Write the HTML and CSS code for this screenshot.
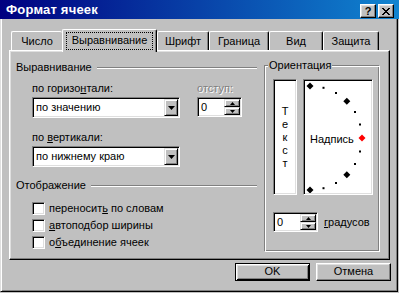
FILE: index.html
```html
<!DOCTYPE html>
<html lang="ru">
<head>
<meta charset="utf-8">
<title>Формат ячеек</title>
<link rel="stylesheet" href="styles.css">
</head>
<body>
<div class="win">
  <div class="titlebar">
    <span class="title">Формат ячеек</span>
    <div class="tbtns">
      <span class="tbtn q">?</span>
      <span class="tbtn"><svg width="8" height="7" viewBox="0 0 8 7"><path d="M0 0h2v1h1v1h2V1h1V0h2v1H7v1H6v1H5v1h1v1h1v1h1v1H6V6H5V5H3v1H2v1H0V6h1V5h1V4h1V3H2V2H1V1H0z" fill="#000"/></svg></span>
    </div>
  </div>
  <div class="client">
    <div class="tabs">
      <div class="tab t1 nor">Число</div>
      <div class="tab t2 sel"><span class="focus">Выравнивание</span></div>
      <div class="tab t3">Шрифт</div>
      <div class="tab t4">Граница</div>
      <div class="tab t5">Вид</div>
      <div class="tab t6">Защита</div>
    </div>
    <div class="panel">
      <div class="left">
        <div class="sep"><span>Выравнивание</span><i class="line"></i></div>
        <div class="agrid">
          <div class="lbl l1">по горизо<u>н</u>тали:</div>
          <div class="lbl dis">отступ:</div>
          <div class="combo"><span class="val">по значению</span><span class="dd"><svg width="7" height="4" viewBox="0 0 7 4"><path d="M0 0h7L3.5 4z" fill="#000"/></svg></span></div>
          <div class="spin"><span class="val">0</span><span class="arrows"><span class="ab"><svg width="5" height="3" viewBox="0 0 5 3"><path d="M2.5 0L5 3H0z" fill="#000"/></svg></span><span class="ab"><svg width="5" height="3" viewBox="0 0 5 3"><path d="M0 0h5L2.5 3z" fill="#000"/></svg></span></span></div>
          <div class="lbl l2">по <u>в</u>ертикали:</div>
          <div class="combo c2"><span class="val">по нижнему краю</span><span class="dd"><svg width="7" height="4" viewBox="0 0 7 4"><path d="M0 0h7L3.5 4z" fill="#000"/></svg></span></div>
        </div>
        <div class="sep s2"><span>Отображение</span><i class="line"></i></div>
        <div class="checks">
          <div class="chk"><span class="cb"></span><span>переносит<u>ь</u> по словам</span></div>
          <div class="chk"><span class="cb"></span><span><u>а</u>втоподбор ширины</span></div>
          <div class="chk"><span class="cb"></span><span>о<u>б</u>ъединение ячеек</span></div>
        </div>
      </div>
      <div class="orient">
        <span class="legend">Ориентация</span>
        <div class="orow">
          <div class="sunk vtext"><span>Т</span><span>е</span><span>к</span><span>с</span><span>т</span></div>
          <div class="sunk dial">
            <svg class="arc" width="66" height="112" viewBox="0 0 66 112">
              <g fill="#000">
                <polygon points="5,1.5 8.5,5 5,8.5 1.5,5"/>
                <polygon points="41.8,16.7 45.3,20.2 41.8,23.7 38.3,20.2"/>
                <polygon points="41.8,90.3 45.3,93.8 41.8,97.3 38.3,93.8"/>
                <polygon points="5,105.5 8.5,109 5,112.5 1.5,109"/>
                <rect x="17.5" y="5.8" width="2" height="2"/>
                <rect x="30" y="11" width="2" height="2"/>
                <rect x="49" y="30" width="2" height="2"/>
                <rect x="54" y="42.5" width="2" height="2"/>
                <rect x="54" y="69.5" width="2" height="2"/>
                <rect x="49" y="82" width="2" height="2"/>
                <rect x="30" y="101" width="2" height="2"/>
                <rect x="17.5" y="106.2" width="2" height="2"/>
              </g>
              <polygon points="57,53.5 60.5,57 57,60.5 53.5,57" fill="#ff0000"/>
            </svg>
            <span class="nadpis">Надпись</span>
          </div>
        </div>
        <div class="degrow">
          <div class="spin s2"><span class="val">0</span><span class="arrows"><span class="ab"><svg width="5" height="3" viewBox="0 0 5 3"><path d="M2.5 0L5 3H0z" fill="#000"/></svg></span><span class="ab"><svg width="5" height="3" viewBox="0 0 5 3"><path d="M0 0h5L2.5 3z" fill="#000"/></svg></span></span></div>
          <span class="deg"><u>г</u>радусов</span>
        </div>
      </div>
    </div>
    <div class="buttons">
      <div class="btn def">OK</div>
      <div class="btn">Отмена</div>
    </div>
  </div>
</div>
</body>
</html>
```
FILE: styles.css
```css
* { box-sizing: border-box; margin: 0; padding: 0; }
html, body { width: 399px; height: 293px; overflow: hidden; }
body {
  background: #c0c0c0;
  font: 11px/13px "Liberation Sans", Arial, sans-serif;
  color: #000;
}
u { text-decoration: underline; text-underline-offset: 1px; }

.win { width: 398px; height: 292px; display: flex; flex-direction: column; }

.titlebar {
  height: 19px; width: 399px; flex: none;
  background: linear-gradient(to right, #000080, #1084d0);
  display: flex; justify-content: space-between;
  padding: 0 5px 0 6px;
}
.title { color: #fff; font-weight: bold; font-size: 13px; line-height: 20px; letter-spacing: 0.2px; }
.tbtns { display: flex; gap: 2px; margin-top: 4px; }
.tbtn {
  width: 16px; height: 14px; background: #c0c0c0;
  border: 1px solid; border-color: #fff #000 #000 #fff;
  box-shadow: inset -1px -1px #808080, inset 1px 1px #dfdfdf;
  display: flex; align-items: center; justify-content: center;
}
.tbtn.q { font-weight: bold; font-size: 11px; line-height: 11px; }

.client {
  flex: 1; display: flex; flex-direction: column;
  border-left: 1px solid #dfdfdf; border-right: 1px solid #000; border-bottom: 1px solid #000;
  box-shadow: inset 1px 0 #fff, inset -1px -1px #808080;
}

.tabs { display: flex; align-items: flex-end; height: 21px; margin: 10px 0 0 10px; }
.tab {
  height: 19px; text-align: center; padding-top: 3px;
  border-top: 1px solid #fff; border-left: 1px solid #fff; border-right: 1px solid #000;
  border-radius: 2px 2px 0 0;
  box-shadow: inset -1px 0 #808080;
}
.tab.nor { border-right: 0; box-shadow: none; }
.t1 { width: 51px; }
.t2 { width: 95px; }
.t3 { width: 52px; }
.t4 { width: 60px; }
.t5 { width: 54px; }
.t6 { width: 56px; }
.tab.sel {
  height: 23px; margin-bottom: -2px; position: relative; z-index: 1;
  background: #c0c0c0; padding: 2px 3px 0 3px;
}
.focus {
  display: block; height: 18px; border: 1px dotted #000; padding-top: 1px;
}

.panel {
  margin-left: 8px; width: 381px; height: 210px; flex: none;
  border: 1px solid; border-color: #fff #000 #000 #fff;
  box-shadow: inset -1px -1px #808080, inset 1px 1px #dfdfdf;
  display: flex;
}
.left { width: 241px; margin: 9px 0 0 6px; }
.sep { height: 14px; display: flex; align-items: center; }
.sep .line { flex: 1; height: 2px; margin: 2px 0 0 5px; border-top: 1px solid #808080; border-bottom: 1px solid #fff; }
.agrid {
  display: grid; grid-template-columns: 148px 45px; column-gap: 17px;
  margin: 8px 0 0 16px;
}
.lbl { height: 13px; }
.lbl.l2 { margin-top: 13px; grid-column: 1 / 3; }
.dis { color: #808080; text-shadow: 1px 1px #fff; }
.combo {
  margin-top: 2px; height: 21px; background: #fff;
  border: 1px solid; border-color: #808080 #fff #fff #808080;
  box-shadow: inset 1px 1px #000, inset -1px -1px #dfdfdf;
  display: flex; align-items: center; padding: 1px;
}
.combo.c2 { grid-column: 1; }
.combo .val { flex: 1; padding-left: 2px; }
.dd {
  width: 14px; height: 17px; background: #c0c0c0;
  border: 1px solid; border-color: #dfdfdf #000 #000 #dfdfdf;
  box-shadow: inset 1px 1px #fff, inset -1px -1px #808080;
  display: flex; align-items: center; justify-content: center;
}
.spin {
  margin-top: 2px; height: 20px; width: 45px; background: #fff;
  border: 1px solid; border-color: #808080 #fff #fff #808080;
  box-shadow: inset 1px 1px #000, inset -1px -1px #dfdfdf;
  display: flex; align-items: center; padding: 1px;
}
.spin .val { flex: 1; padding-left: 2px; }
.arrows { width: 16px; height: 16px; display: flex; flex-direction: column; }
.ab {
  flex: 1; background: #c0c0c0;
  border: 1px solid; border-color: #dfdfdf #000 #000 #dfdfdf;
  box-shadow: inset 1px 1px #fff, inset -1px -1px #808080;
  display: flex; align-items: center; justify-content: center;
}
.ab svg { display: block; }

.sep.s2 { margin-top: 11px; }
.checks { margin: 10px 0 0 16px; }
.chk { height: 17px; display: flex; align-items: flex-start; gap: 4px; }
.cb {
  width: 13px; height: 13px; background: #fff; flex: none;
  border: 1px solid; border-color: #808080 #fff #fff #808080;
  box-shadow: inset 1px 1px #000, inset -1px -1px #dfdfdf;
}

.orient {
  position: relative; width: 116px; height: 187px; margin: 14px 0 0 7px;
  border: 1px solid; border-color: #808080 #fff #fff #808080;
  box-shadow: inset 1px 1px #fff, inset -1px -1px #808080;
  padding: 13px 0 0 8px;
}
.legend { position: absolute; left: 3px; top: -7px; background: #c0c0c0; padding: 0 1px; }
.orow { display: flex; gap: 6px; }
.sunk {
  background: #fff;
  border: 1px solid; border-color: #808080 #fff #fff #808080;
  box-shadow: inset 1px 1px #000, inset -1px -1px #dfdfdf;
  height: 116px;
}
.vtext { width: 24px; display: flex; flex-direction: column; align-items: center; justify-content: center; }
.dial { width: 70px; position: relative; padding: 1px; }
.arc { display: block; }
.nadpis { position: absolute; left: 6px; top: 53px; }
.degrow { display: flex; align-items: center; gap: 6px; margin-top: 17px; }
.spin.s2 { margin-top: 0; }

.buttons { display: flex; justify-content: flex-end; gap: 6px; margin: 3px 6px 0 0; }
.btn {
  width: 75px; height: 18px; text-align: center; line-height: 15px;
  border: 1px solid; border-color: #fff #000 #000 #fff;
  box-shadow: inset -1px -1px #808080, inset 1px 1px #dfdfdf;
}
.btn.def {
  border-color: #000;
  box-shadow: inset 1px 1px #fff, inset -1px -1px #000, inset 2px 2px #dfdfdf, inset -2px -2px #808080;
}
```
